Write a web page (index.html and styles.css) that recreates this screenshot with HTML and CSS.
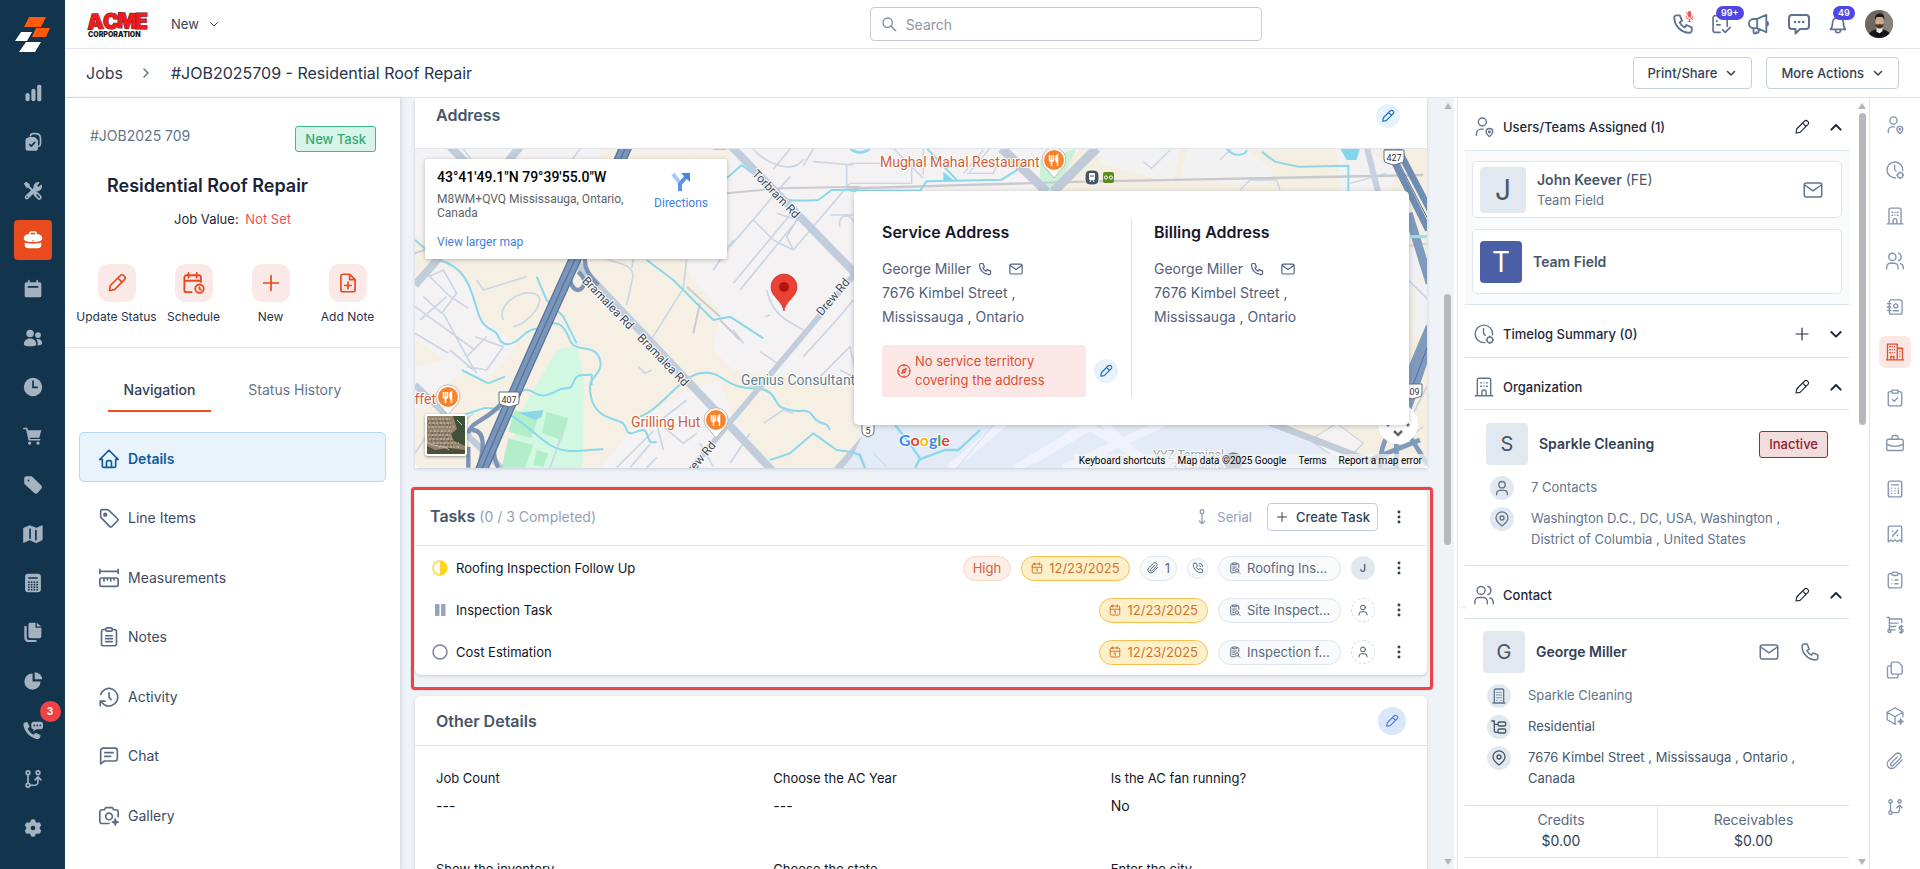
FILE: index.html
```html
<!DOCTYPE html>
<html lang="en">
<head>
<meta charset="utf-8">
<title>#JOB2025709 - Residential Roof Repair</title>
<link rel="stylesheet" href="styles.css">
</head>
<body>
<svg class="sprite" aria-hidden="true">
  <symbol id="bars" viewBox="0 0 24 24"><g fill="currentColor" stroke="none"><rect x="3" y="12" width="5" height="10" rx="2.500"/><rect x="10" y="7" width="5" height="15" rx="2.500"/><rect x="17" y="2" width="5" height="20" rx="2"/></g></symbol>
  <symbol id="clipcheck" viewBox="0 0 24 24"><path d="M9 4.500a3 3 0 0 1 3-2.500h3c4 0 6 2 6 6v6a3 3 0 0 1-2 3" stroke-width="2"/><path d="M7 6h7l4 4v10a2.500 2.500 0 0 1-2.500 2.500h-10A2.500 2.500 0 0 1 3 20v-10a3 3 0 0 1 3-3z" fill="currentColor" stroke="none"/><path d="M8 15l2 2 4-4.500" class="cut"/></symbol>
  <symbol id="tools" viewBox="0 0 24 24"><path d="M4.500 4.500l6 6" stroke-width="2.400"/><path d="M1 3l3-2 4 3v3L7 8H4z" fill="currentColor" stroke="none"/><path d="M15.500 15.500l4 4" stroke-width="6"/><path d="M4.500 19.500L15 9.500" stroke-width="5"/><path d="M22 5a5.500 5.500 0 0 1-7 6.500A5.500 5.500 0 0 1 19 2l-3 3.500 2.500 2.500z" fill="currentColor" stroke-width="1.400"/><path d="M17 17l2.500 2.500" class="cut"/><circle cx="4.800" cy="19.200" r="1" class="hole"/></symbol>
  <symbol id="briefcase-solid" viewBox="0 0 24 24"><path d="M8 5.500V4.500a2 2 0 0 1 2-2h4a2 2 0 0 1 2 2v1" stroke-width="1.800"/><path d="M6 5h12a5 5 0 0 1 5 5c0 3-3 4.500-11 4.500S1 13 1 10a5 5 0 0 1 5-5z" fill="currentColor" stroke="none"/><path d="M2 15c3 1.800 17 1.800 20 0v2.500a4.500 4.500 0 0 1-4.500 4.500h-11A4.500 4.500 0 0 1 2 17.500z" fill="currentColor" stroke="none"/><path d="M12 12.800v.4" stroke="#e84c1d" stroke-width="1.400"/></symbol>
  <symbol id="cal-solid" viewBox="0 0 24 24"><path d="M4 4h16a2 2 0 0 1 2 2v14a2 2 0 0 1-2 2H4a2 2 0 0 1-2-2V6a2 2 0 0 1 2-2z" fill="currentColor" stroke="none"/><path d="M7 2v4M17 2v4" stroke-width="2"/><path d="M6.500 9.500h11" class="cut"/></symbol>
  <symbol id="people-solid" viewBox="0 0 24 24"><g fill="currentColor" stroke="none"><circle cx="8.500" cy="6.500" r="4.500"/><circle cx="18" cy="8.500" r="3.500"/><path d="M1 20c0-5 3-7.500 7.500-7.500S16 15 16 20c-2 2.500-13 2.500-15 0zM17.500 21c.500-3 0-5.500-1.500-7.500 4-1 7 1.500 7 5.500-.5 1.500-3 2-5.500 2z"/></g></symbol>
  <symbol id="clock-solid" viewBox="0 0 24 24"><circle cx="12" cy="12" r="11" fill="currentColor" stroke="none"/><path d="M12 5v7.500h5" class="cut"/></symbol>
  <symbol id="cart-solid" viewBox="0 0 24 24"><path d="M1 3h3.500l3 13.500H20" stroke-width="2"/><path d="M5.500 5H22l-2.500 9H7.500z" fill="currentColor" stroke="none"/><circle cx="8" cy="20.500" r="2" fill="currentColor" stroke="none"/><circle cx="18" cy="20.500" r="2" fill="currentColor" stroke="none"/></symbol>
  <symbol id="tag-solid" viewBox="0 0 24 24"><path d="M4 1.500h6.500L22 12.500a3 3 0 0 1 0 4L17.500 21.500a3 3 0 0 1-4 0L1.500 10.500V4A2.500 2.500 0 0 1 4 1.500z" fill="currentColor" stroke="none"/><path d="M6.500 6.500h.1" class="cut"/></symbol>
  <symbol id="map-solid" viewBox="0 0 24 24"><path d="M1 5l7-3 8 3 7-3v17l-7 3.500-8-3.500-7 3z" fill="currentColor" stroke-width="1"/><path d="M8.500 6v11M15.500 8v11" class="cut"/></symbol>
  <symbol id="calc-solid" viewBox="0 0 24 24"><rect x="2.500" y="1" width="19" height="22" rx="3.500" fill="currentColor" stroke="none"/><path d="M7 6h10" class="cut"/><path d="M7 11h10M7 14h10M7 17h10M7 20h10" class="cut" stroke-dasharray=".1 3.200"/></symbol>
  <symbol id="docs-solid" viewBox="0 0 24 24"><path d="M3 6v13a4 4 0 0 0 4 4h8" stroke-width="2.800"/><path d="M9 1h6v6h7v10a2.500 2.500 0 0 1-2.500 2.500H9A2.500 2.500 0 0 1 6.500 17V3.500A2.500 2.500 0 0 1 9 1z" fill="currentColor" stroke="none"/><path d="M16.500 1L22 5.500h-5.500z" fill="currentColor" stroke="none"/></symbol>
  <symbol id="pie-solid" viewBox="0 0 24 24"><path d="M11.500 3v9.500H21A9.700 9.700 0 1 1 11.500 3z" fill="currentColor" stroke="none"/><path d="M14 1.500a9 9 0 0 1 9 8.500h-9z" fill="currentColor" stroke="none"/></symbol>
  <symbol id="phonechat-solid" viewBox="0 0 24 24"><path d="M1 3.500L5 2l3 6-2.500 2.200c1.500 3.500 4 6 7.500 7.500l2.200-2.500 6 3L20 22c-1 1-3 1-4 .7C8 21 2 14 .7 7c-.2-1.500-.2-2.800.3-3.500z" fill="currentColor" stroke="none"/><path d="M13 2h8a3 3 0 0 1 3 3v3a3 3 0 0 1-3 3h-5l-4 3 1-3a3 3 0 0 1-3-3V5a3 3 0 0 1 3-3z" fill="currentColor" stroke="none"/><path d="M13.500 6.500h8" class="cut" stroke-dasharray=".1 3.500"/></symbol>
  <symbol id="branch" viewBox="0 0 24 24"><circle cx="6" cy="4.500" r="2.200"/><circle cx="18" cy="4.500" r="2.200"/><circle cx="6" cy="19.500" r="2.200"/><path d="M6 7v10M8.500 19.500H14a4 4 0 0 0 4-4V10M14.500 13L18 9.500l3.500 3.500"/></symbol>
  <symbol id="gear-solid" viewBox="0 0 24 24"><path d="M12 1.500c1 0 2.200.3 2.500 1l.8 2.300 1.500.8 2.400-.5c1 0 2.800 3.200 2.500 4l-1.600 1.900v2l1.600 1.900c.3.900-1.500 4-2.500 4.100l-2.400-.5-1.500.8-.8 2.300c-.6 1.200-4.400 1.200-5 0l-.8-2.300-1.500-.8-2.400.5c-1-.1-2.800-3.200-2.500-4.100L3.900 13v-2L2.300 9.100C2 8.300 3.800 5.100 4.800 5l2.400.6 1.500-.8.800-2.300c.3-.7 1.500-1 2.500-1z" fill="currentColor" stroke="none"/><circle cx="12" cy="12" r="2.800" class="hole"/></symbol>

  <symbol id="chev-down" viewBox="0 0 24 24"><path d="M5 9l7 7 7-7"/></symbol>
  <symbol id="chev-up" viewBox="0 0 24 24"><path d="M5 16l7-7 7 7"/></symbol>
  <symbol id="chev-right" viewBox="0 0 24 24"><path d="M8 4l8 8-8 8"/></symbol>
  <symbol id="search" viewBox="0 0 24 24"><circle cx="10" cy="10" r="7"/><path d="M15 15l7 7"/></symbol>
  <symbol id="phone" viewBox="0 0 24 24"><path d="M5 2.500h3.500L11 8.500 8.300 10.300a13 13 0 0 0 5.500 5.500l1.800-2.700 5.900 2.500V19a2.500 2.500 0 0 1-2.500 2.500C10 21.500 2.500 14 2.500 5A2.500 2.500 0 0 1 5 2.500z"/></symbol>
  <symbol id="phonecall" viewBox="0 0 24 24"><path d="M5 2.500h3.500L11 8.500 8.300 10.300a13 13 0 0 0 5.500 5.500l1.800-2.700 5.900 2.500V19a2.500 2.500 0 0 1-2.500 2.500C10 21.500 2.500 14 2.500 5A2.500 2.500 0 0 1 5 2.500zM15 7a3 3 0 0 1 2 2M15 2.500a7 7 0 0 1 6.500 6.500"/></symbol>
  <symbol id="tasks" viewBox="0 0 24 24"><path d="M11 22H5a2.500 2.500 0 0 1-2.500-2.500v-15A2.500 2.500 0 0 1 5 2h12a2.500 2.500 0 0 1 2.500 2.500V15M7 8v1M7 13h4M14 19l3 3 6-6"/></symbol>
  <symbol id="megaphone" viewBox="0 0 24 24"><path d="M10 6.500L20 2v19l-10-4.500H6a5 5 0 0 1 0-10zM10 6.500v10M6 16.500V21a1.500 1.500 0 0 0 3 0M9 21a1.500 1.500 0 0 0 2.500 0v-4M20 9.500c2.500 0 2.500 4.500 0 4.500"/></symbol>
  <symbol id="chatdots" viewBox="0 0 24 24"><path d="M5 3h14a3 3 0 0 1 3 3v8a3 3 0 0 1-3 3h-6l-4.500 4.500V17H5a3 3 0 0 1-3-3V6a3 3 0 0 1 3-3z"/><path d="M8 10h8.200" stroke-width="2.600" stroke-dasharray=".1 4"/></symbol>
  <symbol id="bell" viewBox="0 0 24 24"><path d="M3 18.500c2-2 2.500-4 2.500-8a6.500 6.500 0 0 1 13 0c0 4 .5 6 2.500 8zM9 19v.5a3 3 0 0 0 6 0V19"/></symbol>
  <symbol id="pencil" viewBox="0 0 24 24"><path d="M3 21l1-6L16 3a2.700 2.700 0 0 1 4 0l1 1a2.700 2.700 0 0 1 0 4L9 20zM13 6l5 5"/></symbol>
  <symbol id="calclock" viewBox="0 0 24 24"><path d="M9.500 22H4a2.500 2.500 0 0 1-2.500-2.500V6A2.500 2.500 0 0 1 4 3.500h13A2.500 2.500 0 0 1 19.500 6v5M6 1v5M15 1v5M2 9.500h17.500M18 16.500v2l1.500 1"/><circle cx="18" cy="18.200" r="4.600"/></symbol>
  <symbol id="plus" viewBox="0 0 24 24"><path d="M12 3v18M3 12h18"/></symbol>
  <symbol id="fileplus" viewBox="0 0 24 24"><path d="M14 1.500H6A2.500 2.500 0 0 0 3.500 4v16A2.500 2.500 0 0 0 6 22.500h12a2.500 2.500 0 0 0 2.500-2.500V8zM14 1.500V8h6.500M12 11v8M8 15h8"/></symbol>
  <symbol id="home" viewBox="0 0 24 24"><path d="M1 12.500h3V20a2 2 0 0 0 2 2h12a2 2 0 0 0 2-2v-7.500h3L12 1.500zM9 22v-6a2 2 0 0 1 2-2h2a2 2 0 0 1 2 2v6"/></symbol>
  <symbol id="tag" viewBox="0 0 24 24"><path d="M4 2h6l1.500.6 10.500 10a2.200 2.200 0 0 1 0 3L15.600 22a2.200 2.200 0 0 1-3 0L2.600 11.500 2 10V4a2 2 0 0 1 2-2z"/><circle cx="7.500" cy="8" r="1.600" fill="currentColor"/></symbol>
  <symbol id="ruler" viewBox="0 0 24 24"><path d="M1 4h22M1 1.500v5M23 1.500v5M3 12h18a2 2 0 0 1 2 2v6a2 2 0 0 1-2 2H3a2 2 0 0 1-2-2v-6a2 2 0 0 1 2-2zM6 12v3.500M10 12v2.500M14 12v3.500M18 12v2.500"/></symbol>
  <symbol id="notes" viewBox="0 0 24 24"><path d="M8 3H5.500A2.500 2.500 0 0 0 3 5.500V20a2.500 2.500 0 0 0 2.500 2.500h13A2.500 2.500 0 0 0 21 20V5.500A2.500 2.500 0 0 0 18.500 3H16M10 1h4a2 2 0 0 1 0 4h-4a2 2 0 0 1 0-4zM8 10.500h8M8 14h8M8 17.500h8"/></symbol>
  <symbol id="history" viewBox="0 0 24 24"><path d="M2 9A10.500 10.500 0 1 1 7 21.500M1.500 22.500V17H7M1.500 17L6 21M12 7v5.500l2.500 2.500"/></symbol>
  <symbol id="chat" viewBox="0 0 24 24"><path d="M5 2.500h14a3 3 0 0 1 3 3V15a3 3 0 0 1-3 3H6.500L2 21.500v-16a3 3 0 0 1 3-3zM7 8h10M7 12.500h7"/></symbol>
  <symbol id="camera" viewBox="0 0 24 24"><path d="M12 21H3.500A2.500 2.500 0 0 1 1 18.500V7a2.500 2.500 0 0 1 2.500-2.500h3L8 2h8l1.500 2.500h3A2.500 2.500 0 0 1 23 7v6"/><circle cx="12" cy="12.500" r="4"/><path d="M19.500 15l1.300 3 3 1.300-3 1.300-1.300 3-1.300-3-3-1.300 3-1.300z" fill="currentColor" stroke-width="1"/></symbol>
  <symbol id="mail" viewBox="0 0 24 24"><rect x="1.500" y="3.500" width="21" height="17" rx="2.500"/><path d="M2 6l10 7 10-7"/></symbol>
  <symbol id="compass" viewBox="0 0 24 24"><circle cx="12" cy="12" r="10.500"/><path d="M8 16l2-6 6-2-2 6zM12 1.500V4M12 20v2.500M1.500 12H4M20 12h2.500M11.500 12.500l1-1"/></symbol>
  <symbol id="serial" viewBox="0 0 24 24"><rect x="9.500" y="1.500" width="5" height="5" rx="1"/><path d="M12 7v14M8 18l4 4 4-4"/></symbol>
  <symbol id="cal1" viewBox="0 0 24 24"><path d="M5 4h14a2.500 2.500 0 0 1 2.500 2.500v13A2.500 2.500 0 0 1 19 22H5a2.500 2.500 0 0 1-2.500-2.500v-13A2.500 2.500 0 0 1 5 4zM7.500 1.500V6M16.500 1.500V6M2.500 10.500h19M10.500 14.500l2-1V18.500"/></symbol>
  <symbol id="clip" viewBox="0 0 24 24"><path d="M21.500 10.500l-9.500 9.700a6 6 0 0 1-8.600-8.500L13 2.800a4 4 0 0 1 6 5.700l-9.300 9.300a2 2 0 0 1-3-2.800L15 6.500"/></symbol>
  <symbol id="clipsearch" viewBox="0 0 24 24"><path d="M7.500 3.500H5A1.500 1.500 0 0 0 3.500 5v15A1.500 1.500 0 0 0 5 21.500h7M15.500 3.500H18A1.500 1.500 0 0 1 19.500 5v6M8 2h7.500v3.500H8zM7.500 10h7M7.500 13.500h3M7.500 17h2.500"/><circle cx="16" cy="17" r="3.300"/><path d="M18.500 19.500L22 23"/></symbol>
  <symbol id="person" viewBox="0 0 24 24"><circle cx="12" cy="7" r="4.800"/><path d="M4 22v-1.500a5 5 0 0 1 5-5h6a5 5 0 0 1 5 5V22"/></symbol>
  <symbol id="userpin" viewBox="0 0 24 24"><circle cx="10" cy="6" r="4.800"/><path d="M3 22v-2a5.500 5.500 0 0 1 5.500-5.500h2.500M18.500 23.500s-4-2.800-4-5.700a4 4 0 0 1 8 0c0 2.900-4 5.700-4 5.700z"/><circle cx="18.500" cy="17.800" r="1"/></symbol>
  <symbol id="clockgear" viewBox="0 0 24 24"><path d="M13 22.300A10.500 10.500 0 1 1 22.300 13M11.500 5.500v6l2 2"/><circle cx="19" cy="19" r="3.500"/><path d="M19 14.500v1M19 22.500v1M14.500 19h1M22.500 19h1"/></symbol>
  <symbol id="building" viewBox="0 0 24 24"><path d="M1.500 22.500h21M4 22.500V3.500a2 2 0 0 1 2-2h12a2 2 0 0 1 2 2v19M9.500 22.500V18a2.500 2.500 0 0 1 5 0v4.500M8 7h1M12 7h0M15 7h1M8 11h1M12 11h0M15 11h1"/></symbol>
  <symbol id="building2" viewBox="0 0 24 24"><path d="M3 22.500h18M5 22.500v-19a2 2 0 0 1 2-2h10a2 2 0 0 1 2 2v19"/><path d="M9 6.500h0M12 6.500h0M15 6.500h0M9 10.500h0M12 10.500h0M15 10.500h0M9 14.500h0M12 14.500h0M15 14.500h0M9 18.500h0M15 18.500h0"/></symbol>
  <symbol id="buildings" viewBox="0 0 24 24"><path d="M.5 22.500h23M2 22.500v-21h13v21M15 7h7v15.500M6.500 22.500V18h4v4.500M5 5h1M8.500 5h0M11.500 5h0M5 9h1M8.500 9h0M11.500 9h0M5 13h1M8.500 13h0M11.500 13h0M18.500 11h0M18.500 14.500h0M18.500 18h0"/></symbol>
  <symbol id="users" viewBox="0 0 24 24"><circle cx="8.500" cy="6.500" r="4.800"/><path d="M1 22.500V20a5 5 0 0 1 5-5h5a5 5 0 0 1 5 5v2.500M16.500 1.500a5.200 5.200 0 0 1 0 10M19 15.500a5 5 0 0 1 4 4.500v2.500"/></symbol>
  <symbol id="contactbook" viewBox="0 0 24 24"><rect x="4.500" y="2.500" width="17" height="19" rx="2.500"/><path d="M2 7.500h4.500M2 12h4.500M2 16.500h4.500M9.500 17h7"/><circle cx="13" cy="10.500" r="2.600"/></symbol>
  <symbol id="clipok" viewBox="0 0 24 24"><path d="M8 3.500H5.500A2.500 2.500 0 0 0 3 6v14a2.500 2.500 0 0 0 2.500 2.500h13A2.500 2.500 0 0 0 21 20V6a2.500 2.500 0 0 0-2.500-2.500H16M8 1.500h8v4H8zM8.500 14l2.500 2.500 4.500-5"/></symbol>
  <symbol id="briefcase" viewBox="0 0 24 24"><path d="M3.500 7h17A2.500 2.500 0 0 1 23 9.500v10a2.500 2.500 0 0 1-2.500 2.500h-17A2.500 2.500 0 0 1 1 19.500v-10A2.500 2.500 0 0 1 3.500 7zM8 7V4a2 2 0 0 1 2-2h4a2 2 0 0 1 2 2v3M1 13.500c6 4 16 4 22 0"/></symbol>
  <symbol id="calc" viewBox="0 0 24 24"><rect x="3" y="1.500" width="18" height="21" rx="2.500"/><path d="M7.500 6.500h9M7.500 11h0M12 11h0M16.500 11h0M7.500 14.500h0M12 14.500h0M16.500 14v4M7.500 18h0M12 18h0"/></symbol>
  <symbol id="receipt" viewBox="0 0 24 24"><path d="M3 22.500V3.500a2 2 0 0 1 2-2h14a2 2 0 0 1 2 2v19L18 20l-3 2-3-2-3 2-3-2zM8.500 15l7-8M8.500 8h.5M15 14h.5"/></symbol>
  <symbol id="cliplist" viewBox="0 0 24 24"><path d="M8 3.500H5.500A2.500 2.500 0 0 0 3 6v14a2.500 2.500 0 0 0 2.500 2.500h13A2.500 2.500 0 0 0 21 20V6a2.500 2.500 0 0 0-2.500-2.500H16M10 1.500h4a2 2 0 0 1 0 4.500h-4a2 2 0 0 1 0-4.500zM8 12h0M12 12h4M8 17h0M12 17h4"/></symbol>
  <symbol id="cartdollar" viewBox="0 0 24 24"><path d="M1.500 2h3v14.500M4.500 4H21v5M5 9.500h11M5 14h8M5 18.500h7"/><circle cx="4.500" cy="20" r="2"/><path d="M22.500 14h-3a1.800 1.800 0 0 0 0 3.800h1.500a1.800 1.800 0 0 1 0 3.800h-3M20.500 12.500v11"/></symbol>
  <symbol id="copy" viewBox="0 0 24 24"><path d="M9.500 1.500h7l5 5V15a2.500 2.500 0 0 1-2.500 2.500H9.500A2.500 2.500 0 0 1 7 15V4a2.500 2.500 0 0 1 2.500-2.500zM7 6.500H4.500A2.500 2.500 0 0 0 2 9v11a2.500 2.500 0 0 0 2.500 2.500h9A2.500 2.500 0 0 0 16 20v-2.500"/></symbol>
  <symbol id="box" viewBox="0 0 24 24"><path d="M13 22.500l-1 .5-10.500-6V7L12 1l10.500 6v6M1.500 7L12 13l10.500-6M12 13v10"/><path d="M19.500 15l1.300 3 3 1.300-3 1.300-1.300 3-1.300-3-3-1.300 3-1.300z" fill="currentColor" stroke-width="1"/></symbol>
  <symbol id="pin" viewBox="0 0 24 24"><path d="M12 22.500S3 16 3 10.300a9 9 0 0 1 18 0C21 16 12 22.500 12 22.500z"/><circle cx="12" cy="10.500" r="3"/></symbol>
  <symbol id="tree" viewBox="0 0 24 24"><path d="M1 3h4v15a2 2 0 0 0 2 2h3M5 8h5"/><rect x="10.500" y="4.500" width="11.500" height="6" rx="2"/><rect x="10.500" y="15" width="11.500" height="6" rx="2"/></symbol>
  <symbol id="kebab" viewBox="0 0 24 24"><g fill="currentColor" stroke="none"><circle cx="12" cy="3.500" r="2.500"/><circle cx="12" cy="12" r="2.500"/><circle cx="12" cy="20.500" r="2.500"/></g></symbol>
  <symbol id="arrow-right" viewBox="0 0 24 24"><path d="M2 12h19M14 5l7 7-7 7"/></symbol>
  <symbol id="food" viewBox="-14 -13 28 32"><path d="M0 18L-7 9.500A12 12 0 1 1 7 9.500z" fill="#fff" stroke="#b9a79a" stroke-width=".8"/><circle r="10" fill="#f9832a" stroke="none"/><path d="M-4.500-5v4.500a2 2 0 0 0 4 0V-5M-2.500-5V6M3.500 6V-5c-2 1-2 5-1 6.500h1" fill="none" stroke="#fff" stroke-width="1.500"/></symbol>
</svg>

<nav class="sidebar" aria-label="Main">
  <svg class="logo" viewBox="0 0 35 36"><path d="M14 0h17l-5 10H9zM21 11h14l-4 9H17z" fill="#ff5a0a"/><path d="M6 15h11l-5 9H0zM11 25h15l-6 10H4z" fill="#fff"/></svg>
  <a href="#" aria-label="Dashboard"><svg class="ic"><use href="#bars"/></svg></a>
  <a href="#" aria-label="Tasks"><svg class="ic"><use href="#clipcheck"/></svg></a>
  <a href="#" aria-label="Services"><svg class="ic"><use href="#tools"/></svg></a>
  <a href="#" aria-label="Jobs" class="on"><svg class="ic"><use href="#briefcase-solid"/></svg></a>
  <a href="#" aria-label="Calendar"><svg class="ic"><use href="#cal-solid"/></svg></a>
  <a href="#" aria-label="People"><svg class="ic"><use href="#people-solid"/></svg></a>
  <a href="#" aria-label="Time"><svg class="ic"><use href="#clock-solid"/></svg></a>
  <a href="#" aria-label="Cart"><svg class="ic"><use href="#cart-solid"/></svg></a>
  <a href="#" aria-label="Tags"><svg class="ic"><use href="#tag-solid"/></svg></a>
  <a href="#" aria-label="Map"><svg class="ic"><use href="#map-solid"/></svg></a>
  <a href="#" aria-label="Accounting"><svg class="ic"><use href="#calc-solid"/></svg></a>
  <a href="#" aria-label="Documents"><svg class="ic"><use href="#docs-solid"/></svg></a>
  <a href="#" aria-label="Reports"><svg class="ic"><use href="#pie-solid"/></svg></a>
  <a href="#" aria-label="Calls"><svg class="ic"><use href="#phonechat-solid"/></svg><span class="count">3</span></a>
  <a href="#" aria-label="Workflows"><svg class="ic"><use href="#branch"/></svg></a>
  <a href="#" aria-label="Settings"><svg class="ic"><use href="#gear-solid"/></svg></a>
</nav>

<div class="shell">
  <header class="topbar">
    <div class="brand">
      <svg class="acme" viewBox="0 0 62 28" role="img" aria-label="Acme Corporation"><g class="acme-word"><text x="0" y="19" transform="rotate(-3 8 12)">A</text><text x="16" y="19">C</text><text x="30" y="18" transform="rotate(3 36 12)">M</text><text x="48" y="19">E</text></g><text class="corp" x="1" y="27">CORPORATION</text></svg>
      <button class="plain new">New <svg class="ic s12"><use href="#chev-down"/></svg></button>
    </div>
    <label class="search"><svg class="ic s16"><use href="#search"/></svg><input type="text" placeholder="Search" aria-label="Search"></label>
    <div class="tools">
      <button class="plain" aria-label="Phone"><svg class="ic s22"><use href="#phone"/></svg><svg class="mic" viewBox="0 0 10 12"><rect x="3" y="0" width="4" height="7" rx="2" fill="#ee5757"/><path d="M1 5a4 4 0 0 0 8 0M5 9v3M3 11.500h4M1 1l8 9" fill="none" stroke="#ee5757"/></svg></button>
      <button class="plain" aria-label="Tasks"><svg class="ic s20"><use href="#tasks"/></svg><span class="pill">99+</span></button>
      <button class="plain" aria-label="Announcements"><svg class="ic s22"><use href="#megaphone"/></svg></button>
      <button class="plain" aria-label="Messages"><svg class="ic s24"><use href="#chatdots"/></svg></button>
      <button class="plain" aria-label="Notifications"><svg class="ic s20"><use href="#bell"/></svg><span class="pill">49</span></button>
      <svg class="avatar" viewBox="0 0 28 28" role="img" aria-label="Profile"><defs><clipPath id="av"><circle cx="14" cy="14" r="14"/></clipPath></defs><g clip-path="url(#av)"><rect width="28" height="28" fill="#6d6862"/><rect x="18" width="10" height="28" fill="#88827a"/><path d="M3 28c0-5 3-7 7.500-8.500h8C23 21 26 23 26 28z" fill="#15161f"/><path d="M11.500 17h6v4l-3 3-3-2z" fill="#e8e4e0"/><ellipse cx="14.500" cy="12" rx="4.300" ry="6" fill="#d0a78d"/><path d="M10 10C9.500 5 12 3.500 15 3.500s5 2 4.200 6.500L18 7h-6.500z" fill="#1d1916"/><path d="M10.300 13.500c1.200 1.500 2.500.8 4.200.8s3 .7 4.200-.8c0 3.500-2 5-4.200 5s-4.200-1.500-4.200-5z" fill="#4a342a"/><path d="M12 22l2.500 1.500L17 22v4l-2.500-1.500L12 26z" fill="#050508"/></g></svg>
    </div>
  </header>

  <div class="crumbs">
    <a href="#">Jobs</a>
    <svg class="ic s16 bold"><use href="#chev-right"/></svg>
    <h1>#JOB2025709 - Residential Roof Repair</h1>
    <button class="btn">Print/Share <svg class="ic s12 bold"><use href="#chev-down"/></svg></button>
    <button class="btn">More Actions <svg class="ic s12 bold"><use href="#chev-down"/></svg></button>
  </div>

  <div class="content">
    <section class="job">
      <div class="summary">
        <div class="job-top"><span>#JOB2025 709</span><span class="badge-new">New Task</span></div>
        <h2>Residential Roof Repair</h2>
        <p class="value">Job Value: <span>Not Set</span></p>
        <div class="actions">
          <button class="plain"><span><svg class="ic s20"><use href="#pencil"/></svg></span>Update Status</button>
          <button class="plain"><span><svg class="ic s22"><use href="#calclock"/></svg></span>Schedule</button>
          <button class="plain"><span><svg class="ic s20"><use href="#plus"/></svg></span>New</button>
          <button class="plain"><span><svg class="ic s20"><use href="#fileplus"/></svg></span>Add Note</button>
        </div>
      </div>
      <div class="tabs"><a href="#" class="on">Navigation</a><a href="#">Status History</a></div>
      <nav class="menu" aria-label="Job">
        <a href="#" class="on"><svg class="ic s20"><use href="#home"/></svg>Details</a>
        <a href="#"><svg class="ic s20"><use href="#tag"/></svg>Line Items</a>
        <a href="#"><svg class="ic s20"><use href="#ruler"/></svg>Measurements</a>
        <a href="#"><svg class="ic s20"><use href="#notes"/></svg>Notes</a>
        <a href="#"><svg class="ic s20"><use href="#history"/></svg>Activity</a>
        <a href="#"><svg class="ic s20"><use href="#chat"/></svg>Chat</a>
        <a href="#"><svg class="ic s20"><use href="#camera"/></svg>Gallery</a>
      </nav>
    </section>

    <main class="center">
      <section class="card address">
        <div class="card-head"><h3>Address</h3><button class="round" aria-label="Edit address"><svg class="ic s14"><use href="#pencil"/></svg></button></div>
        <div class="map">
          <svg class="map-art" viewBox="0 0 1012 319" preserveAspectRatio="xMidYMid slice">
            <rect width="1012" height="319" fill="#f4f2f3"/>
            <g transform="translate(-15 -59) scale(.333333)" fill="none" stroke-linejoin="round">
              <g fill="#f5f0e3">
                <path d="M110 505H850L870 560 960 660 940 780 1000 840 1180 860 1380 900V1133H1110L990 960 960 870 860 900 720 990 600 1133H45V960L180 850 260 870 300 830 350 760 245 690 215 590z"/>
                <path d="M600 177h390l-10 70H600zM45 750l90 60-90 20z"/>
                <path d="M45 430l70 70-70 70z"/>
              </g>
              <path d="M470 780l60-14 22 100-4 267H310l60-180z" fill="#d2f8e1"/>
              <path d="M345 960l70 20-20 65-70-20zM440 965l65 20-20 65-60-20zM325 1045l75 20-25 68h-70zM410 1080l35 10-15 40-30-5z" fill="#b3eecb"/>
              <path d="M355 968l75-8-5 22-20 8z" fill="#8cd5ea"/>
              <path d="M1310 1133L1500 920 1700 1000V1133z" fill="#e3ebf6"/>
              <g stroke="#ccd6e3" stroke-width="5">
                <path d="M45 650l180 130M75 545l70 70 60 40M85 560l45-20 40 70-45 60-55-50M60 690l80-70M45 730l100 60M150 780l70 60M130 670l70 130 30 50M225 740l85 30-50 70-60-10M200 800l60-60"/>
                <path d="M230 570l20 30 130-40M310 690c-20-40 40-90 90-80s-10 90-60 100M620 505c30 20 70 10 80 50l-20 90M700 505l-5 30M860 505l-10 90-100 160M715 830l20 20 20-10"/>
                <path d="M990 470L1170 260M1060 390l60 60M940 540l60-90M1000 580l190-230M1020 600l180-220M1130 370l60 20-30 50 20 40-60-30M1230 410l120 110M1180 480l170-200M1290 375l70 0M1320 410c-10-30 30-50 43-10M1100 600c20 80 60 90 110 120M1095 680l15-5M1080 785l60 40M1210 800l100-110 50-60M1260 860l90-90 13 60M1320 840l40 20M1090 1000l60-40 30 10M1000 720l30 40"/>
                <path d="M860 930l-90 70 20 80M790 1010l60 50 40-30M900 1060l40 70M650 1133l110-110M690 1133l60-70M740 1133l30-30M1050 1030l-60 90M1030 880l70 20"/>
                <path d="M190 177l30 40M540 177l-30 40M1060 177c30 40 120 80 150 30M1170 177l-50 60M1240 215l120 10M1340 225v70h23M1240 177l-30 50M450 1133l40-110"/>
                <path d="M45 1090l60-90M100 1070l120-100M250 1090l60 40"/>
              </g>
              <g stroke="#cbcccf" stroke-width="6"><path d="M980 310L1140 295l240-5M860 590l100 90M900 640l-20 90M960 690l60 60M45 490l40-15"/></g>
              <g stroke="#8bd8ec" stroke-width="6">
                <path d="M45 450l70 60c90 20 100 100 120 160s50 40 60 70 40 30 70 0 50-20 70-30 40-20 60 10 10 40 35 50 60 0 70 40-30 50-30 80 5 70 50 90 50 10 60 40 50-20 60 10 10 30 30 25"/>
                <path d="M410 560l30 70 50 50 40 80M740 510l80 60 120 120 50-10 100 65M185 840l80 40 50-20M360 905c40-20 40 20 80 10s30-20 60-20 10-40 50-40 20-10 25 30"/>
                <path d="M720 980c60-20 120-120 180-130s70 30 120 40 80 0 100 30 10 30 50 40 50-10 70 20 40 10 50 40"/>
                <path d="M190 975l60-20c80-10 150 80 200 110s100 15 160 12M1110 1110l60-20 70-60 70 50 70 10M980 265l45-40 60 45c50 80 100 60 170 60l40-30h80M940 177h40M1350 177c20 15 40 15 60 0"/>
              </g>
              <g stroke="#c2cddc">
                <path d="M520 510L1115 1140M995 170L1370 555" stroke-width="24"/>
                <path d="M1370 545L870 1140" stroke-width="17"/>
                <path d="M45 585l75-85M320 220l40-50M150 170l60 60" stroke-width="24"/>
                <path d="M45 885l260 250M1310 1140l140-160" stroke-width="20"/>
              </g>
              <g stroke="#7c93b5" stroke-width="13"><path d="M555 505c-5 40 30 70 40 80M510 560c0 30 20 50 35 35s10-30-10-50M315 930c-60 70-100 60-110 100M215 1020c40 0 40 50 20 113M290 1050c-15 40-5 60 5 83M205 1070v63"/></g>
              <path d="M680 165C600 350 400 770 240 1150" stroke="#5b7599" stroke-width="38"/>
              <path d="M680 165C600 350 400 770 240 1150" stroke="#7a97bb" stroke-width="30"/>
              <path d="M680 165C600 350 400 770 240 1150" stroke="#57749d" stroke-width="4"/>
            </g>
            <g transform="translate(435 -9) scale(.333333)" fill="none">
              <path d="M570 130L690 25h110l-80 130H600z" fill="#f5eedd"/>
              <path d="M570 60l110-35-60 130h-50z" fill="#c9f2d8"/>
              <path d="M640 150L750 25h980v130z" fill="#f5efe2"/>
              <path d="M740 25h250l-20 105-220-60z" fill="#f3f2f3"/>
              <path d="M990 120l20-95h180l80 70-20 40zM1460 25h80l100 60-20 70h-150z" fill="#f3f2f3"/>
              <path d="M0 70h185v60H0M340 100l60-70M130 25l90 90M220 25v80M880 65l25 20 55-55M350 100h80l20-50M1110 60l50-50h90M1170 150l30-30h80l10 30M1500 130l110-30M420 25l-60 70" stroke="#cbd5e1" stroke-width="4"/>
              <path d="M0 145L700 125 1720 105" stroke="#c9cacd" stroke-width="7"/>
              <path d="M0 152h210l20-28 225-5 80-50M230 25l90 95M10 30c10 8 30 8 40 0M1130 25c20 30 60 20 60 5M1235 35l40 30 70 15 150-3v80" stroke="#8bd8ec" stroke-width="6"/>
              <path d="M280 95l30 25h-30zM1470 25h60l-10 35-30 0z" fill="#84d6ec"/>
              <path d="M455 25L590 155M610 155L740 25" stroke="#c0cad8" stroke-width="28"/>
              <path d="M1550 20l35 140" stroke="#c6d0de" stroke-width="18"/>
            </g>
            <g transform="translate(755 -9) scale(.333333)" fill="none">
              <path d="M700 150h80v850H700z" fill="#f5efe2"/>
              <path d="M710 330h60v60l-50 60zM740 430l40-20v150l-50 40z" fill="#f1f0f2"/>
              <path d="M700 320l80-10M715 420l60 60M720 700l60-60M770 740l-60 120" stroke="#c7d1df" stroke-width="5"/>
              <path d="M650 20L775 270M680 20l100 190" stroke="#6f8cb2" stroke-width="20"/>
              <path d="M715 220l65 210M780 560L700 750M775 620L700 840" stroke="#7f9abd" stroke-width="26"/>
              <path d="M662 20L775 240M780 600L712 780" stroke="#54709a" stroke-width="3"/>
              <path d="M720 290h60" stroke="#9eddec" stroke-width="10"/>
            </g>
            <g transform="translate(435 271) scale(.333333)" fill="none">
              <path d="M-10 145L60 0H1260l350 145z" fill="#e3ebf6"/>
              <path d="M300 145L460 10M500 145L720 10M550 120l170-100 200 120M760 10l140 135M640 145L940 10" stroke="#f1f3fc" stroke-width="24"/>
              <path d="M70 100l40 40M320 145L430 15" stroke="#cfd8e6" stroke-width="3"/>
              <path d="M135 15l40 50 35 50-15 30M210 118l75-28 40 0 65-60M0 95l30 10 15 40" stroke="#8bd8ec" stroke-width="7"/>
              <path d="M1260 0h500v150H1560z" fill="#f5efe2"/>
              <path d="M1380 60l80-50 80 60-60 60zM1600 110l120-90" stroke="#cdd6e2" stroke-width="4" fill="#f4f2f3"/>
              <path d="M1240 0l390 150" stroke="#c2cbd8" stroke-width="20"/>
              <path d="M1590 145c0-60 20-110 60-140M1640 145c0-60 0-80-10-145M1560 120l150-60M1680 50l60 95" stroke="#7f9abd" stroke-width="14"/>
              <circle cx="1150" cy="125" r="28" fill="#7b8694"/>
            </g>
            <g class="road"><text transform="translate(361 45) rotate(46)" y="4">Torbram Rd</text><text transform="translate(193 154) rotate(46)" y="4">Bramalea Rd</text><text transform="translate(248 211) rotate(46)" y="4">Bramalea Rd</text><text transform="translate(418 148) rotate(-50)" y="4">Drew Rd</text><text transform="translate(284 311) rotate(-50)" y="4">Drew Rd</text></g>
            <g class="poi"><text x="465" y="18">Mughal Mahal Restaurant</text><text x="216" y="278">Grilling Hut</text><text x="-17" y="255">Buffet</text></g>
            <g class="place"><text x="326" y="236">Genius Consultants</text><text class="small" x="738" y="310">YYZ Terminal</text><text class="small" x="756" y="322">3 Satellite</text></g>
            <use href="#food" x="625" y="-2" width="28" height="32"/><use href="#food" x="287" y="258" width="28" height="32"/><use href="#food" x="19" y="235" width="28" height="32"/>
            <g><rect x="670" y="21" width="14" height="15" rx="5" fill="#455466" stroke="#fff"/><rect x="674" y="24" width="6" height="7" rx="1" fill="#fff"/><path d="M675 33l1-2M679 33l-1-2" stroke="#fff"/><path d="M675 27h4" stroke="#455466"/><rect x="688" y="23" width="11" height="11" rx="2" fill="#5c8a1e"/><circle cx="691" cy="28.500" r="1.600" fill="none" stroke="#fff"/><circle cx="696" cy="28.500" r="1.600" fill="none" stroke="#fff"/></g>
            <g class="shield"><path d="M84 243h20v9q0 4-3 4l-7 2-7-2q-3 0-3-4z"/><text x="94" y="254">407</text><path d="M447 273h12v9q0 4-2 4l-4 2-4-2q-2 0-2-4z"/><text x="453" y="285">5</text><path d="M969 1h20v9q0 4-3 4l-7 2-7-2q-3 0-3-4z"/><text x="979" y="12">427</text><path d="M987 235h20v9q0 4-3 4l-7 2-7-2q-3 0-3-4z"/><text x="997" y="246">409</text></g>
            <path d="M369 162c-2-11-13-14-13-24a13 13 0 0 1 26 0c0 10-11 13-13 24z" fill="#ea4335" stroke="#c5221f" stroke-width=".6"/><circle cx="369" cy="138" r="5" fill="#b31412"/>
            <text class="google" x="484" y="297"><tspan fill="#4285f4">G</tspan><tspan fill="#ea4335">o</tspan><tspan fill="#fbbc05">o</tspan><tspan fill="#4285f4">g</tspan><tspan fill="#34a853">l</tspan><tspan fill="#ea4335">e</tspan></text>
            <circle cx="983" cy="275" r="20" fill="#fff"/><path d="M979 282l4 4 4-4M974 277l-2-2M992 277l2-2" fill="none" stroke="#666" stroke-width="2.500"/>
          </svg>
          <div class="place-card">
            <div><strong>43°41'49.1"N 79°39'55.0"W</strong><p>M8WM+QVQ Mississauga, Ontario, Canada</p><a href="#">View larger map</a></div>
            <a href="#" class="dir"><svg viewBox="0 0 20 20"><path d="M2 2l7 9" stroke="#a9c7f7" stroke-width="4"/><path d="M9 19v-7l6-7" fill="none" stroke="#5b93ea" stroke-width="4"/><path d="M10 1h9v9z" fill="#4285e4"/></svg>Directions</a>
          </div>
          <svg class="sat" viewBox="0 0 38 38" aria-label="Satellite view" role="img"><rect width="38" height="38" fill="#95846f"/><path d="M26 0h12v30l-11-5-3-7 6-5z" fill="#3f5138"/><path d="M0 30l8 4 14-2 16 2v4H0z" fill="#4a5138"/><path d="M1 3h22M2 7h22M1 11h26M3 15h22M1 19h22M2 23h24M6 27h26M12 31h20" stroke="#c3b19d" stroke-width="1.600" stroke-dasharray="1.600 1.900 2.400 1.200"/><path d="M1 5h24M2 9h22M1 17h22M2 21h20M4 25h22M8 29h18" stroke="#6d5c4d" stroke-width="1.400" stroke-dasharray="1 2.200 2 1.600"/><path d="M0 26c8 6 16 2 22 8M30 4l5 5" stroke="#c8bfae" stroke-width="1" fill="none"/></svg>
          <div class="addresses">
            <div class="addr">
              <h4>Service Address</h4>
              <p>George Miller <svg class="ic s14"><use href="#phone"/></svg><svg class="ic s14"><use href="#mail"/></svg></p>
              <p>7676 Kimbel Street ,</p><p>Mississauga , Ontario</p>
              <div class="territory"><div class="warn"><svg class="ic s14"><use href="#compass"/></svg><span>No service territory covering the address</span></div><button class="round" aria-label="Edit territory"><svg class="ic s14"><use href="#pencil"/></svg></button></div>
            </div>
            <div class="addr">
              <h4>Billing Address</h4>
              <p>George Miller <svg class="ic s14"><use href="#phone"/></svg><svg class="ic s14"><use href="#mail"/></svg></p>
              <p>7676 Kimbel Street ,</p><p>Mississauga , Ontario</p>
            </div>
          </div>
          <div class="credits-bar"><span>Keyboard shortcuts</span><span>Map data ©2025 Google</span><a href="#">Terms</a><a href="#">Report a map error</a></div>
        </div>
      </section>

      <div class="highlight">
        <section class="card tasks">
          <div class="tasks-head"><h3>Tasks <span>(0 / 3 Completed)</span></h3>
            <span class="serial"><svg class="ic s16"><use href="#serial"/></svg>Serial</span>
            <button class="create"><svg class="ic s12"><use href="#plus"/></svg>Create Task</button>
            <button class="plain kebab" aria-label="More"><svg class="ic s14"><use href="#kebab"/></svg></button></div>
          <div class="task"><svg class="state" viewBox="0 0 16 16"><circle cx="8" cy="8" r="7" fill="#fff" stroke="#fcd834" stroke-width="1.500"/><path d="M8 1a7 7 0 0 1 0 14z" fill="#fcd61c"/></svg><span class="name">Roofing Inspection Follow Up</span>
            <span class="chip high">High</span><span class="chip date"><svg class="ic s12"><use href="#cal1"/></svg>12/23/2025</span><span class="chip att"><svg class="ic s12"><use href="#clip"/></svg>1</span><span class="chip call"><svg class="ic s12"><use href="#phonecall"/></svg></span><span class="chip tpl"><svg class="ic s12"><use href="#clipsearch"/></svg>Roofing Ins...</span><span class="who j">J</span>
            <button class="plain kebab" aria-label="More"><svg class="ic s14"><use href="#kebab"/></svg></button></div>
          <div class="task"><svg class="state" viewBox="0 0 16 16"><rect x="3" y="2" width="4.500" height="12" rx="1" fill="#94a3bf"/><rect x="9" y="2" width="4.500" height="12" rx="1" fill="#94a3bf"/></svg><span class="name">Inspection Task</span>
            <span class="chip date"><svg class="ic s12"><use href="#cal1"/></svg>12/23/2025</span><span class="chip tpl"><svg class="ic s12"><use href="#clipsearch"/></svg>Site Inspect...</span><span class="who"><svg class="ic s12"><use href="#person"/></svg></span>
            <button class="plain kebab" aria-label="More"><svg class="ic s14"><use href="#kebab"/></svg></button></div>
          <div class="task"><svg class="state" viewBox="0 0 16 16"><circle cx="8" cy="8" r="7" fill="#fff" stroke="#7c86a3" stroke-width="1.500"/></svg><span class="name">Cost Estimation</span>
            <span class="chip date"><svg class="ic s12"><use href="#cal1"/></svg>12/23/2025</span><span class="chip tpl"><svg class="ic s12"><use href="#clipsearch"/></svg>Inspection f...</span><span class="who"><svg class="ic s12"><use href="#person"/></svg></span>
            <button class="plain kebab" aria-label="More"><svg class="ic s14"><use href="#kebab"/></svg></button></div>
        </section>
      </div>

      <section class="card other">
        <div class="other-head"><h3>Other Details</h3><button class="round big" aria-label="Edit details"><svg class="ic s14"><use href="#pencil"/></svg></button></div>
        <dl>
          <div><dt>Job Count</dt><dd>---</dd></div><div><dt>Choose the AC Year</dt><dd>---</dd></div><div><dt>Is the AC fan running?</dt><dd>No</dd></div>
          <div><dt>Show the inventory</dt><dd>---</dd></div><div><dt>Choose the state</dt><dd>---</dd></div><div><dt>Enter the city</dt><dd>---</dd></div>
        </dl>
      </section>
    </main>
    <div class="scroll mid"><i></i><b></b><i class="down"></i></div>

    <aside class="info">
      <button class="plain handle" aria-label="Collapse panel"><svg class="ic"><use href="#arrow-right"/></svg></button>
      <div class="info-body">
        <div class="sec"><svg class="ic s20"><use href="#userpin"/></svg><h3>Users/Teams Assigned (1)</h3><button class="plain" aria-label="Edit"><svg class="ic s16"><use href="#pencil"/></svg></button><button class="plain" aria-label="Collapse"><svg class="ic s16 bold"><use href="#chev-up"/></svg></button></div>
        <div class="team">
          <div class="member"><span class="sq s46">J</span><div><strong>John Keever</strong> (FE)<small>Team Field</small></div><svg class="ic s20"><use href="#mail"/></svg></div>
          <div class="member tall"><span class="sq blue">T</span><div><strong>Team Field</strong></div></div>
        </div>
        <div class="sec"><svg class="ic s20"><use href="#clockgear"/></svg><h3>Timelog Summary (0)</h3><button class="plain" aria-label="Add"><svg class="ic s16"><use href="#plus"/></svg></button><button class="plain" aria-label="Expand"><svg class="ic s16 bold"><use href="#chev-down"/></svg></button></div>
        <div class="sec short"><svg class="ic s20"><use href="#building"/></svg><h3>Organization</h3><button class="plain" aria-label="Edit"><svg class="ic s16"><use href="#pencil"/></svg></button><button class="plain" aria-label="Collapse"><svg class="ic s16 bold"><use href="#chev-up"/></svg></button></div>
        <div class="entity org">
          <div class="ent-head"><span class="sq">S</span><strong>Sparkle Cleaning</strong><span class="inactive">Inactive</span></div>
          <div class="line"><span><svg class="ic s16"><use href="#person"/></svg></span><p>7 Contacts</p></div>
          <div class="line"><span><svg class="ic s16"><use href="#pin"/></svg></span><p>Washington D.C., DC, USA, Washington ,<br>District of Columbia , United States</p></div>
        </div>
        <div class="sec"><svg class="ic s20"><use href="#users"/></svg><h3>Contact</h3><button class="plain" aria-label="Edit"><svg class="ic s16"><use href="#pencil"/></svg></button><button class="plain" aria-label="Collapse"><svg class="ic s16 bold"><use href="#chev-up"/></svg></button></div>
        <div class="entity">
          <div class="ent-head"><span class="sq">G</span><strong>George Miller</strong><svg class="ic s20"><use href="#mail"/></svg><svg class="ic s20"><use href="#phone"/></svg></div>
          <div class="line"><span><svg class="ic s16"><use href="#building2"/></svg></span><p>Sparkle Cleaning</p></div>
          <div class="line dark"><span><svg class="ic s16"><use href="#tree"/></svg></span><p>Residential</p></div>
          <div class="line dark"><span><svg class="ic s16"><use href="#pin"/></svg></span><p>7676 Kimbel Street , Mississauga , Ontario ,<br>Canada</p></div>
        </div>
        <div class="money"><div>Credits<b>$0.00</b></div><div>Receivables<b>$0.00</b></div></div>
      </div>
      <div class="scroll side"><i></i><b></b><i class="down"></i></div>
    </aside>

    <nav class="rail" aria-label="Panels">
      <a href="#" aria-label="Users"><svg class="ic"><use href="#userpin"/></svg></a>
      <a href="#" aria-label="Timelog"><svg class="ic"><use href="#clockgear"/></svg></a>
      <a href="#" aria-label="Organization"><svg class="ic"><use href="#building"/></svg></a>
      <a href="#" aria-label="Contact"><svg class="ic"><use href="#users"/></svg></a>
      <a href="#" aria-label="Contact book"><svg class="ic"><use href="#contactbook"/></svg></a>
      <a href="#" aria-label="Property" class="on"><svg class="ic"><use href="#buildings"/></svg></a>
      <a href="#" aria-label="Inspections"><svg class="ic"><use href="#clipok"/></svg></a>
      <a href="#" aria-label="Projects"><svg class="ic"><use href="#briefcase"/></svg></a>
      <a href="#" aria-label="Estimates"><svg class="ic"><use href="#calc"/></svg></a>
      <a href="#" aria-label="Invoices"><svg class="ic"><use href="#receipt"/></svg></a>
      <a href="#" aria-label="Forms"><svg class="ic"><use href="#cliplist"/></svg></a>
      <a href="#" aria-label="Purchase orders"><svg class="ic"><use href="#cartdollar"/></svg></a>
      <a href="#" aria-label="Copies"><svg class="ic"><use href="#copy"/></svg></a>
      <a href="#" aria-label="Assets"><svg class="ic"><use href="#box"/></svg></a>
      <a href="#" aria-label="Attachments"><svg class="ic"><use href="#clip"/></svg></a>
      <a href="#" aria-label="Workflow"><svg class="ic"><use href="#branch"/></svg></a>
    </nav>
  </div>
</div>
</body>
</html>
```
FILE: styles.css
```css
* { box-sizing: border-box; }
body, h1, h2, h3, h4, p, dl, dd { margin: 0; }
body { display: flex; height: 100vh; overflow: hidden; background: #fff; color: #1e293b; font: 14px/20px Inter, "Liberation Sans", sans-serif; }
a { color: inherit; text-decoration: none; }
button { font: inherit; color: inherit; cursor: pointer; }
.sprite { position: absolute; width: 0; height: 0; }
.plain { display: flex; align-items: center; padding: 0; border: 0; background: none; }

.ic { flex: none; width: 20px; height: 20px; fill: none; stroke: currentColor; stroke-width: 2; stroke-linecap: round; stroke-linejoin: round; overflow: visible; }
.s12 { width: 12px; height: 12px; }
.s14 { width: 14px; height: 14px; }
.s16 { width: 16px; height: 16px; }
.s20 { width: 20px; height: 20px; }
.s22 { width: 22px; height: 22px; }
.s24 { width: 24px; height: 24px; }
.bold { stroke-width: 3; }
.cut { stroke: #12344d; stroke-width: 2; fill: none; }
.hole { fill: #12344d; stroke: none; }

.sidebar { flex: none; display: flex; flex-direction: column; align-items: center; width: 65px; padding-top: 17px; background: #12344d; color: #a5b3c0; gap: 9px; }
.logo { flex: none; width: 35px; height: 36px; margin-bottom: 11px; }
.sidebar a { flex: none; position: relative; display: flex; align-items: center; justify-content: center; width: 38px; height: 40px; border-radius: 4px; }
.sidebar a.on { background: #e84c1d; color: #fff; }
.count { position: absolute; top: -9px; right: -9px; width: 21px; height: 21px; border-radius: 50%; background: #f04144; color: #fff; font-size: 10px; line-height: 21px; font-weight: 700; text-align: center; }

.shell { flex: 1; min-width: 0; display: flex; flex-direction: column; }
.topbar { flex: none; display: grid; grid-template-columns: 11fr 392px 9fr; align-items: center; height: 49px; border-bottom: 1px solid #dfe4ef; }
.brand { display: flex; align-items: center; gap: 22px; padding-left: 22px; }
.acme { width: 62px; height: 28px; }
.acme-word { font: 900 21px Inter, sans-serif; fill: #ee1c1c; stroke: #5a0f0f; stroke-width: 1; paint-order: stroke; }
.corp { font: 900 7px Inter, sans-serif; fill: #1b1b1b; }
.new { gap: 9px; font-size: 13px; color: #334155; }
.search { display: flex; align-items: center; gap: 7px; height: 34px; padding: 0 10px; border: 1px solid #c5cad6; border-radius: 4px; color: #7b8698; }
.search input { flex: 1; min-width: 0; border: 0; outline: 0; background: none; font: 14px Inter, sans-serif; color: #334155; }
.search input::placeholder { color: #8b95a6; opacity: 1; }
.tools { display: flex; justify-content: flex-end; align-items: center; gap: 17px; padding-right: 27px; color: #5f7190; }
.tools button { position: relative; }
.mic { position: absolute; top: -2px; right: 0; width: 9px; height: 11px; }
.pill { position: absolute; top: -8px; left: 5px; padding: 0 5px; border-radius: 8px; background: #4f46e5; color: #fff; font-size: 9px; line-height: 14px; font-weight: 600; }
.avatar { width: 28px; height: 28px; }

.crumbs { flex: none; display: flex; align-items: center; height: 49px; padding: 0 21px; border-bottom: 1px solid #dfe4ef; font-size: 16px; color: #334155; }
.crumbs > .ic { margin: 0 19px 0 17px; width: 12px; height: 12px; color: #64748b; }
.crumbs h1 { flex: 1; font-size: 16px; font-weight: 400; color: #28344a; }
.btn { display: flex; align-items: center; gap: 8px; height: 32px; margin-left: 14px; padding: 0 14px; border: 1px solid #c6cfdf; border-radius: 4px; background: #fff; font-size: 13px; font-weight: 500; color: #334155; }

.content { flex: 1; min-height: 0; display: flex; }
.job { flex: none; position: relative; width: 335px; background: #fff; box-shadow: 1px 0 4px rgba(100,116,139,.25); }
.summary { height: 250px; padding-top: 28px; border-bottom: 1px solid #dfe4ef; }
.job-top { display: flex; justify-content: space-between; padding: 0 24px 0 25px; color: #64748b; }
.badge-new { height: 26px; padding: 0 9px; border: 1px solid #3dbd84; border-radius: 3px; background: #d8f3e7; color: #2fae76; font-size: 13px; line-height: 25px; font-weight: 500; }
.summary h2 { margin-top: 22px; padding-right: 50px; font-size: 18px; line-height: 24px; font-weight: 600; text-align: center; color: #1a2438; }
.value { margin-top: 11px; font-size: 13px; text-align: center; }
.value span { margin-left: 3px; color: #ef5350; }
.actions { display: grid; grid-template-columns: repeat(4, minmax(0, 1fr)); padding: 0 14px 0 13px; margin-top: 35px; }
.actions button { flex-direction: column; gap: 5px; font-size: 12px; color: #28344a; white-space: nowrap; }
.actions button span { display: flex; align-items: center; justify-content: center; width: 38px; height: 38px; border-radius: 10px; background: #fbe9e7; color: #e5491d; }
.tabs { display: flex; justify-content: center; gap: 21px; padding-top: 20px; color: #64748b; }
.tabs a { padding: 12px 16px 10px; border-bottom: 2px solid transparent; }
.tabs .on { border-color: #ee4f27; color: #334155; font-weight: 500; }
.menu { display: flex; flex-direction: column; justify-content: space-between; height: 407px; margin-top: 20px; padding: 0 14px; }
.menu a { display: flex; align-items: center; gap: 9px; height: 50px; padding: 3px 0 0 19px; border: 1px solid transparent; border-radius: 5px; color: #3d4a60; }
.menu .ic { color: #5b6b85; }
.menu .on, .menu .on .ic { color: #135a9e; }
.menu .on { border-color: #b5d9f6; background: #e8f3fc; font-weight: 600; }

.center { flex: 1; min-width: 0; padding: 0 14px 0 15px; background: #eff3f8; overflow: hidden; }
.card { background: #fff; box-shadow: 0 1px 3px rgba(100,116,139,.3); }
.card h3 { font-size: 16px; font-weight: 600; color: #475569; }
.card-head { display: flex; justify-content: space-between; align-items: flex-start; height: 51px; padding: 6px 27px 0 21px; border-bottom: 1px solid #dfe4ef; }
.card-head h3 { line-height: 22px; }
.round { display: flex; align-items: center; justify-content: center; flex: none; width: 24px; height: 24px; padding: 0; border: 0; border-radius: 50%; background: #e6f3fd; color: #1b6ac2; }
.round.big { width: 28px; height: 28px; background: #d9e6fb; color: #5078e8; }
.map { position: relative; height: 319px; overflow: hidden; border-radius: 0 0 6px 6px; }
.map-art { display: block; width: 100%; height: 100%; }
.map-art text { font-family: Roboto, sans-serif; paint-order: stroke; stroke: #fff; stroke-width: 2; stroke-linejoin: round; }
.road text { font-size: 12px; fill: #3c4858; text-anchor: middle; }
.poi text { font-size: 14px; fill: #cf6136; }
.place text { font-size: 14px; fill: #647f8f; }
.place .small { font-size: 12px; fill: #9a9ca6; }
.shield path { fill: #fff; stroke: #65717f; }
.map-art .shield text { font-size: 9px; fill: #333; text-anchor: middle; stroke: none; }
.map-art .google { font: 700 16px Lato, sans-serif; }
.place-card { position: absolute; top: 10px; left: 10px; display: flex; justify-content: space-between; width: 302px; height: 100px; padding: 10px 19px 0 12px; background: #fff; border-radius: 2px; box-shadow: 0 1px 4px rgba(0,0,0,.25); font: 12px/14px Roboto, sans-serif; color: #5f6368; }
.place-card div { width: 200px; }
.place-card strong { display: block; font-size: 14px; line-height: 16px; font-weight: 500; color: #000; white-space: nowrap; }
.place-card p { margin: 7px 0 15px; }
.place-card a { color: #3f7fe0; }
.dir { display: flex; flex-direction: column; align-items: center; padding-top: 3px; gap: 4px; }
.dir svg { width: 20px; height: 20px; }
.sat { position: absolute; left: 10px; bottom: 12px; width: 42px; height: 42px; border: 2px solid #fff; border-radius: 3px; box-shadow: 0 1px 3px rgba(0,0,0,.4); }
.addresses { position: absolute; top: 42px; right: 18px; display: flex; width: 555px; height: 234px; padding: 29px 28px 28px; background: #fff; border-radius: 5px; box-shadow: 0 1px 5px rgba(71,85,105,.35); }
.addr { width: 249px; color: #52607a; }
.addr + .addr { padding-left: 22px; border-left: 1px solid #dbe2ec; }
.addr h4 { margin-bottom: 13px; font-size: 16px; line-height: 24px; font-weight: 600; color: #17172b; }
.addr p { display: flex; align-items: center; gap: 7px; line-height: 24px; }
.addr p .ic + .ic { margin-left: 10px; }
.territory { display: flex; align-items: center; gap: 8px; margin-top: 16px; }
.warn { display: flex; align-items: center; gap: 4px; width: 204px; height: 52px; padding: 0 15px; border-radius: 3px; background: #fbe7e5; color: #dd5131; font-size: 13px; line-height: 19px; }
.credits-bar { position: absolute; right: 0; bottom: 0; display: flex; gap: 12px; padding: 0 5px; background: rgba(245,245,245,.7); font: 10px/14px Roboto, sans-serif; color: #000; }

.highlight { margin: 19px -6px 6px -4px; padding: 0 3px 12px 1px; border: 3px solid #f04343; border-radius: 4px; box-shadow: 0 0 1px #555; }
.tasks { padding-bottom: 2px; border-radius: 0 0 6px 6px; }
.tasks-head { display: flex; align-items: center; height: 56px; margin-bottom: 1px; padding: 0 21px 2px 15px; border-bottom: 1px solid #dfe4ef; }
.tasks-head h3 { flex: 1; }
.tasks-head h3 span { font-size: 14px; font-weight: 400; color: #94a0b8; }
.serial { display: flex; align-items: center; gap: 7px; font-size: 13px; color: #94a0b8; }
.create { display: flex; align-items: center; gap: 8px; height: 28px; margin: 0 14px 0 15px; padding: 0 7px 0 8px; border: 1px solid #c3cddd; border-radius: 4px; background: #fff; font-size: 13px; font-weight: 500; color: #334155; }
.kebab { color: #334155; }
.task { display: flex; align-items: center; height: 42px; padding: 0 21px 0 17px; font-size: 13px; color: #14161f; }
.state { width: 16px; height: 16px; margin-right: 8px; }
.name { flex: 1; font-size: 13px; }
.chip { flex: none; display: flex; align-items: center; gap: 6px; height: 25px; margin-left: 10px; padding: 0 9px; border: 1px solid #dfe6ef; border-radius: 13px; background: #f8fafc; color: #5b6b80; white-space: nowrap; }
.high { border-color: #f5d9c9; background: #fdefe7; color: #d65f3c; }
.date { border-color: #f7c152; background: #fdf0c8; color: #d1732f; }
.att { padding: 0 6px; }
.call { width: 21px; height: 21px; padding: 0 4px; }
.tpl { width: 123px; padding: 0 10px; }
.who { display: flex; align-items: center; justify-content: center; width: 24px; height: 24px; margin: 0 17px 0 10px; border: 1px dashed #d3dae5; border-radius: 50%; color: #475569; }
.who.j { border: 0; background: #e2e8f0; font-size: 11px; font-weight: 500; }
.other { border-radius: 6px 6px 0 0; }
.other-head { display: flex; align-items: center; justify-content: space-between; height: 50px; padding: 0 21px; border-bottom: 1px solid #dfe4ef; }
.other dl { display: grid; grid-template-columns: repeat(3, 1fr); row-gap: 43px; padding: 22px 0 0 21px; margin-right: -21px; font-size: 13px; color: #14161f; }
.other dd { margin-top: 8px; font-size: 14px; }

.scroll { flex: none; display: flex; flex-direction: column; align-items: center; padding: 5px 0 4px; }
.scroll i { border: 4px solid transparent; border-top: 0; border-bottom: 6px solid #b5b5b9; }
.scroll i.down { margin-top: auto; border-top: 6px solid #b5b5b9; border-bottom: 0; }
.scroll b { width: 7px; border-radius: 4px; background: #b7b7bd; }
.mid { width: 13px; background: #eff3f8; }
.mid b { height: 33%; margin-top: 185px; }
.side { width: 14px; }
.side b { height: 41%; margin-top: 4px; }

.info { flex: none; position: relative; display: flex; width: 412px; margin-left: 3px; border-left: 1px solid #dfe4ef; background: #fff; }
.handle { position: absolute; left: 1px; top: 505px; color: #dde2ea; }
.handle .ic { width: 8px; height: 8px; }
.info-body { flex: 1; padding: 0 6px 0 7px; overflow: hidden; }
.sec { display: flex; align-items: center; height: 53px; padding: 6px 5px 0 9px; border-bottom: 1px solid #dbe3ee; color: #64748b; }
.sec.short { height: 52px; }
.sec .ic { stroke-width: 1.7; }
.sec .bold { stroke-width: 3; }
.sec h3 { flex: 1; margin-left: 9px; font-size: 13px; font-weight: 500; color: #1e293b; }
.sec button { margin-left: 18px; color: #1e293b; }
.team { display: grid; gap: 11px; padding: 10px 7px; border-bottom: 1px solid #dbe3ee; background: #f8fafc; }
.member { display: flex; align-items: center; height: 57px; padding: 0 18px 0 7px; border: 1px solid #dfe6f0; border-radius: 5px; background: #fff; color: #475569; }
.member.tall { height: 65px; }
.member div { flex: 1; margin-left: 11px; }
.member strong { font-weight: 600; }
.member small { display: block; font-size: 13px; color: #64748b; }
.member .ic, .ent-head .ic { color: #64748b; stroke-width: 1.8; }
.sq { flex: none; width: 42px; height: 42px; border-radius: 4px; background: #e2e8f0; color: #475569; font-size: 20px; line-height: 42px; text-align: center; }
.s46 { width: 46px; height: 46px; font-size: 28px; line-height: 46px; }
.blue { background: #4a5fa5; color: #fff; font-size: 28px; }
.entity { display: grid; row-gap: 7px; padding: 12px 21px 16px 18px; border-bottom: 1px solid #dbe3ee; }
.org { padding: 13px 21px 15px; }
.ent-head { display: flex; align-items: center; height: 42px; margin-bottom: 4px; }
.ent-head strong { flex: 1; margin-left: 11px; font-weight: 600; color: #334155; }
.ent-head .ic { margin-left: 21px; }
.ent-head .ic:last-child { margin-right: 8px; }
.inactive { height: 27px; padding: 0 9px; border: 1px solid #8f2f38; border-radius: 3px; background: #f2dcdd; color: #8c2530; font-size: 13px; line-height: 25px; font-weight: 500; }
.line { display: flex; gap: 17px; padding-left: 4px; font-size: 13px; color: #64748b; }
.line span { flex: none; display: flex; align-items: center; justify-content: center; width: 24px; height: 24px; border-radius: 50%; background: #e2e8f0; }
.line p { line-height: 21px; padding-top: 1px; }
.line.dark { color: #475569; }
.money { display: grid; grid-template-columns: 1fr 1fr; border-bottom: 1px solid #dbe3ee; text-align: center; color: #5b6b80; }
.money div { padding: 3px 0 6px; line-height: 21px; }
.money div + div { border-left: 1px solid #dbe3ee; }
.money b { display: block; font-weight: 400; color: #334155; }

.rail { flex: none; display: flex; flex-direction: column; justify-content: space-between; align-items: center; width: 51px; padding: 11px 0 46px; border-left: 1px solid #dfe4ef; color: #8394b0; }
.rail .ic { width: 18px; height: 18px; stroke-width: 1.8; }
.rail a { display: flex; align-items: center; justify-content: center; width: 32px; height: 32px; border-radius: 7px; }
.rail .on { background: #fce6e3; color: #dd5131; }
```
